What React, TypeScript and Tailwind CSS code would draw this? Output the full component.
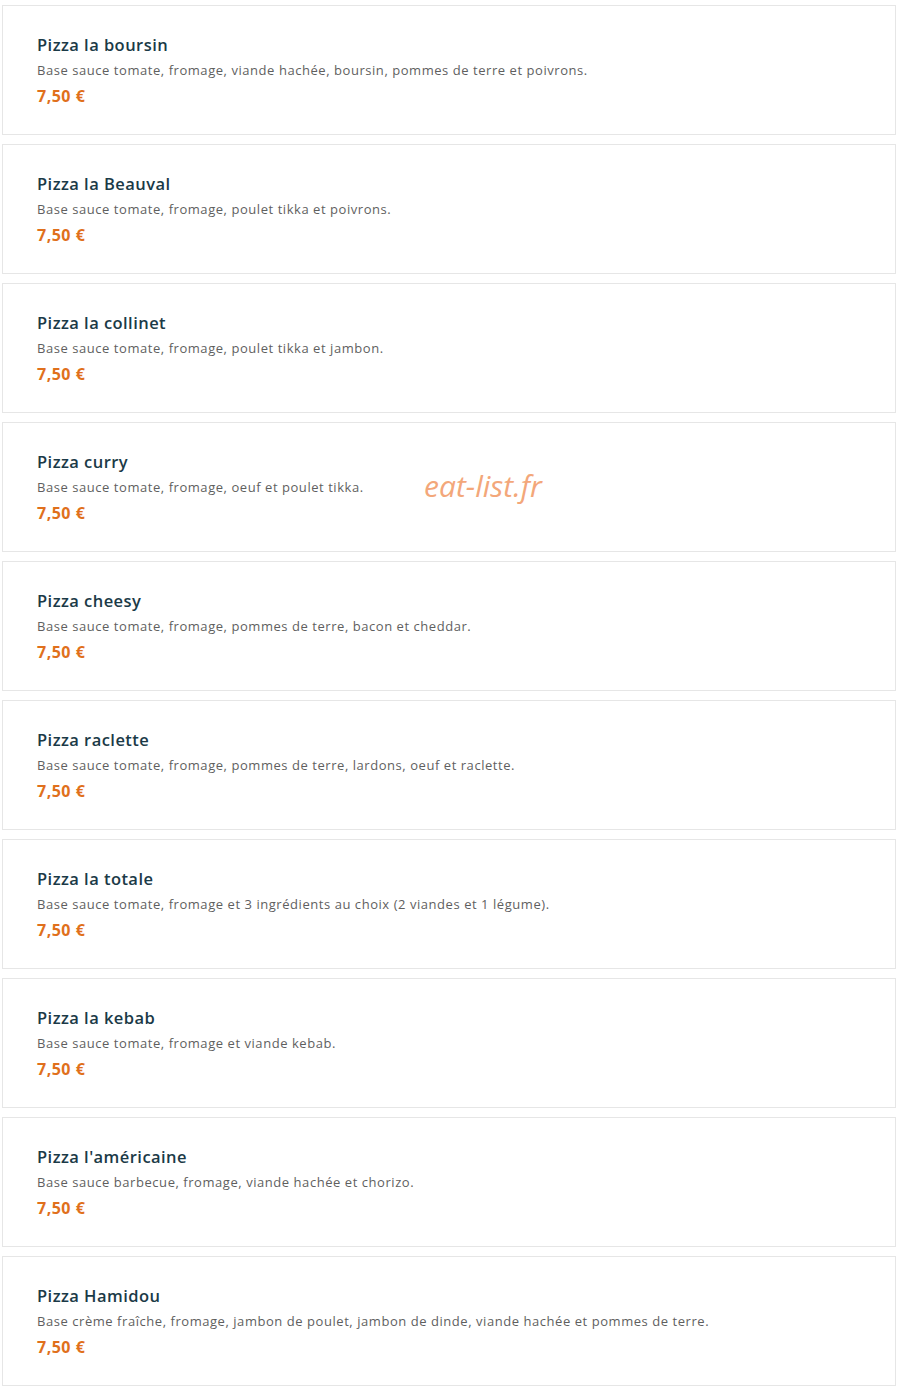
import React from "react";

const items = [
  ["Pizza la boursin", "Base sauce tomate, fromage, viande hachée, boursin, pommes de terre et poivrons."],
  ["Pizza la Beauval", "Base sauce tomate, fromage, poulet tikka et poivrons."],
  ["Pizza la collinet", "Base sauce tomate, fromage, poulet tikka et jambon."],
  ["Pizza curry", "Base sauce tomate, fromage, oeuf et poulet tikka."],
  ["Pizza cheesy", "Base sauce tomate, fromage, pommes de terre, bacon et cheddar."],
  ["Pizza raclette", "Base sauce tomate, fromage, pommes de terre, lardons, oeuf et raclette."],
  ["Pizza la totale", "Base sauce tomate, fromage et 3 ingrédients au choix (2 viandes et 1 légume)."],
  ["Pizza la kebab", "Base sauce tomate, fromage et viande kebab."],
  ["Pizza l'américaine", "Base sauce barbecue, fromage, viande hachée et chorizo."],
  ["Pizza Hamidou", "Base crème fraîche, fromage, jambon de poulet, jambon de dinde, viande hachée et pommes de terre."],
];

export default function App() {
  return (
    <div className="relative bg-white w-[898px] min-h-[1388px] pt-[5px] pl-[2px] pr-[2px] font-['Open_Sans',sans-serif]">
      <div className="flex flex-col gap-[9px] w-[894px]">
        {items.map(([t, d]) => (
          <div key={t} className="h-[130px] border border-[#e6e6e6] bg-white pl-[34px] pt-[28px]">
            <div className="text-[16.5px] leading-[22px] font-semibold tracking-[0.45px] text-[#1b3a47]">{t}</div>
            <div className="mt-[5px] text-[13px] leading-[18px] tracking-[0.55px] text-[#5f5f5f]">{d}</div>
            <div className="mt-[6px] text-[16px] leading-[22px] font-bold tracking-[0.5px] text-[#e0701c]">7,50 €</div>
          </div>
        ))}
      </div>
      <div className="absolute left-[424px] top-[467px] text-[30px] leading-[38px] italic text-[#f3a77a]">
        eat-list.fr
      </div>
    </div>
  );
}
